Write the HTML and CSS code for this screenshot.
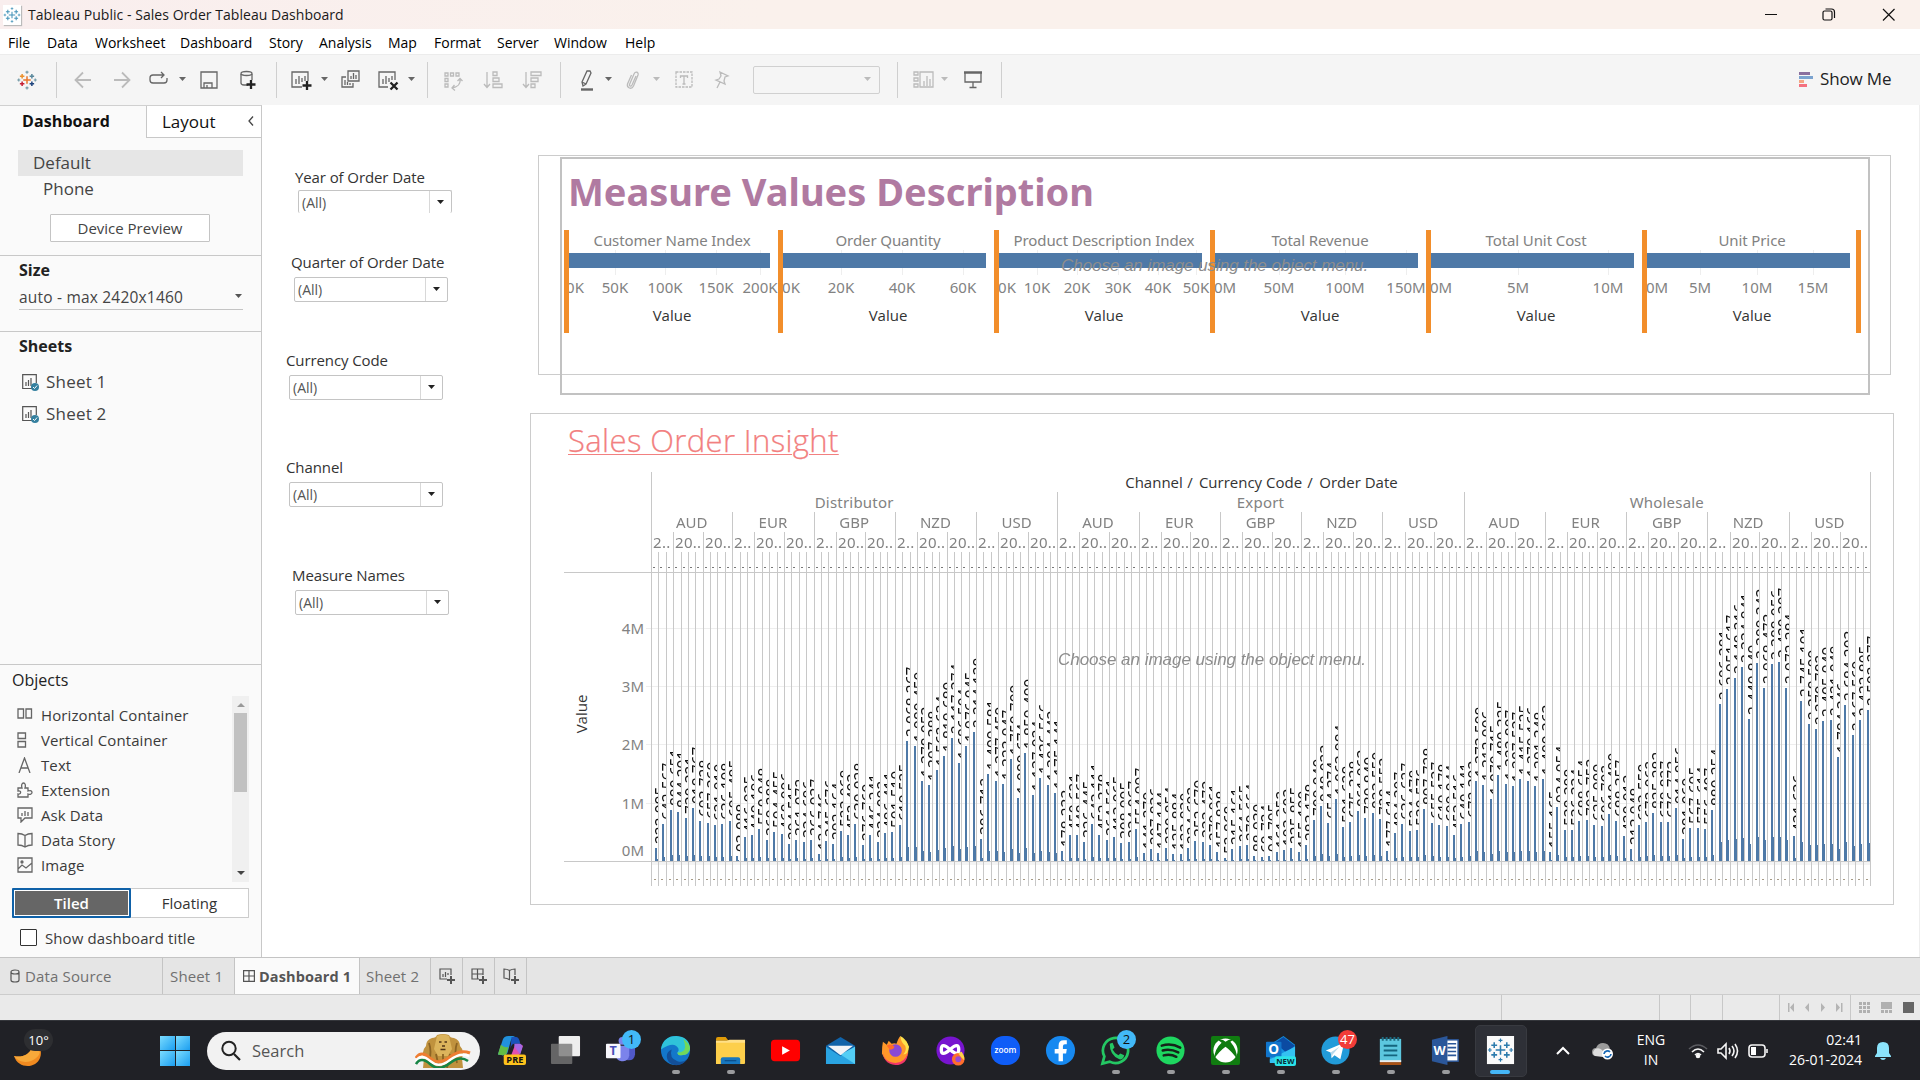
FILE: index.html
```html
<!DOCTYPE html>
<html lang="en">
<head>
<meta charset="utf-8">
<title>Tableau Public - Sales Order Tableau Dashboard</title>
<link rel="stylesheet" href="styles.css">
</head>
<body>
<svg class="defs" width="0" height="0">
  <defs>
    <g id="i-caret"><path d="M0 0h7l-3.500 4z" fill="currentColor"/></g>
    <g id="i-sheet"><path d="M11 14.500H.7V.7h13.600V9M4 8v4M6.500 6v6M9 4v8" fill="none" stroke="#555" stroke-width="1.200"/><circle cx="13" cy="13" r="4" fill="#35809f"/><path d="M11 13l1.500 1.500 2.600-3" fill="none" stroke="#fff" stroke-width="1"/></g>
    <g id="i-tableau" fill="none" stroke-width="1.600">
      <path d="M12 7v10M7 12h10"/><path d="M5.500 4v6M2.500 7h6M18.500 4v6M15.500 7h6M5.500 14v6M2.500 17h6M18.500 14v6M15.500 17h6"/><path d="M12 0v4M10 2h4M12 20v4M10 22h4M1 10v4M-1 12h4M23 10v4M21 12h4" stroke-width="1.200"/>
    </g>
  </defs>
</svg>

<header class="titlebar">
  <svg class="app-icon" width="18" height="20" viewBox="-2 -2 28 28"><use href="#i-tableau" stroke="#4292b8"/></svg>
  <span class="title">Tableau Public - Sales Order Tableau Dashboard</span>
  <svg class="win" width="140" height="20" viewBox="0 0 140 20" fill="none" stroke="#111" stroke-width="1.200"><path d="M3 9.500h12M121 4l11.500 11.500M132.500 4L121 15.500"/><rect x="61" y="6" width="9" height="9" rx="1.500"/><path d="M63.500 4h6a3 3 0 0 1 3 3v6"/></svg>
</header>

<nav class="menubar"><span>File</span><span>Data</span><span>Worksheet</span><span>Dashboard</span><span>Story</span><span>Analysis</span><span>Map</span><span>Format</span><span>Server</span><span>Window</span><span>Help</span></nav>

<div class="toolbar">
  <svg width="24" height="24" viewBox="-4 -4 32 32" fill="none" stroke-width="2"><path d="M12 7v10M7 12h10" stroke="#e8762c"/><path d="M5.500 4v6M2.500 7h6" stroke="#eb912c"/><path d="M18.500 4v6M15.500 7h6" stroke="#59879b"/><path d="M5.500 14v6M2.500 17h6" stroke="#c72035"/><path d="M18.500 14v6M15.500 17h6" stroke="#1f457e"/><path d="M12-.5v4M10 1.500h4M12 20.500v4M10 22.500h4M1 10v4M-1 12h4M23 10v4M21 12h4" stroke="#7199a6" stroke-width="1.500"/></svg>
  <i class="sep"></i>
  <svg class="off" width="24" height="24" viewBox="0 0 24 24"><path d="M20 12H5M12 4.500L4.500 12l7.500 7.500" stroke-width="1.800"/></svg>
  <svg class="off" width="24" height="24" viewBox="0 0 24 24"><path d="M4 12h15M12 4.500l7.500 7.500-7.500 7.500" stroke-width="1.800"/></svg>
  <svg class="on" width="24" height="24" viewBox="0 0 24 24"><path d="M16 7H6a3 3 0 0 0-3 3v2a3 3 0 0 0 3 3h11a3 3 0 0 0 3-3v-2M14 4l3 3-3 3"/></svg>
  <svg class="crt on" width="8" height="5" viewBox="0 0 8 5"><use href="#i-caret"/></svg>
  <svg class="on" width="24" height="24" viewBox="0 0 24 24"><path d="M4 4h16v16H4zM7 20v-5h8v5M10 17v3"/></svg>
  <svg class="on" width="24" height="24" viewBox="0 0 24 24"><path d="M12 17H8a3.500 2 0 0 1-3-2V6M16 12V6"/><ellipse cx="10.500" cy="5.500" rx="5.500" ry="2"/><path d="M15 12v9M10.500 16.500h9" stroke="#222" stroke-width="2.300"/></svg>
  <i class="sep"></i>
  <svg class="on" width="24" height="24" viewBox="0 0 24 24"><path d="M13 19H3V4h16v9M7 11v5M10 8v8M13 10v4M16 8v5"/><path d="M18 13v9M13.500 17.500h9" stroke="#222" stroke-width="2.300"/></svg>
  <svg class="crt on" width="8" height="5" viewBox="0 0 8 5"><use href="#i-caret"/></svg>
  <svg class="on" width="24" height="24" viewBox="0 0 24 24"><path d="M10 3h11v10H10zM13 8v3M15.500 5v6M18 7v4M8 9H4v10h11v-4M7 12v5M9.500 14v3M12 15v2"/></svg>
  <svg class="on" width="24" height="24" viewBox="0 0 24 24"><path d="M12 19H3V4h16v8M7 11v5M10 8v8M13 10v4M16 8v4"/><path d="M14.500 14.500l7 7M21.500 14.500l-7 7" stroke="#222" stroke-width="2.300"/></svg>
  <svg class="crt on" width="8" height="5" viewBox="0 0 8 5"><use href="#i-caret"/></svg>
  <i class="sep"></i>
  <svg class="off" width="24" height="24" viewBox="0 0 24 24"><path d="M4 5h3v3H4zM9.500 5h3v3h-3zM15 5h3v3h-3zM4 10.500h3v3H4zM4 16h3v3H4zM19 11c1 5-3 8-8 9M13.500 17L11 20l3 2.500M16.500 13l2.500-2.500 2.500 2.500"/></svg>
  <svg class="off" width="24" height="24" viewBox="0 0 24 24"><path d="M6 4v15M3 16l3 3.500L9 16M12 4h4v3.500h-4zM12 10h6v3.500h-6zM12 16h9v3.500h-9z"/></svg>
  <svg class="off" width="24" height="24" viewBox="0 0 24 24"><path d="M6 4v15M3 16l3 3.500L9 16M11 4h10v3.500H11zM11 10h7v3.500h-7zM11 16h4v3.500h-4z"/></svg>
  <i class="sep"></i>
  <svg class="on" width="24" height="24" viewBox="0 0 24 24"><path d="M7 14l5-11h3l1 2-5 11-3 2zM7 14l4 2"/><path d="M6 21.500h12" stroke-width="2.400"/></svg>
  <svg class="crt on" width="8" height="5" viewBox="0 0 8 5"><use href="#i-caret"/></svg>
  <svg class="off" width="24" height="24" viewBox="0 0 24 24"><path d="M15 8l-4 9c-1 2-3 1-2.500-.5L13 6c1.500-3 5-2 4 1l-4.500 11c-2 4-7 2-6-2l4-9"/></svg>
  <svg class="crt off" width="8" height="5" viewBox="0 0 8 5"><use href="#i-caret"/></svg>
  <svg class="off" width="24" height="24" viewBox="0 0 24 24"><rect x="4" y="4" width="16" height="15" stroke-dasharray="2.500 1"/><path d="M8.500 10V8h7v2M12 8v8M10.500 16h3"/></svg>
  <svg class="off" width="24" height="24" viewBox="0 0 24 24"><path d="M11 4l8 4-3 1-1 4 1 3-9-4 3-1 2-3zM11 14l-3 6"/></svg>
  <div class="tb-select"><svg class="off" width="8" height="5" viewBox="0 0 8 5"><use href="#i-caret"/></svg></div>
  <i class="sep"></i>
  <svg class="off" width="24" height="24" viewBox="0 0 24 24"><path d="M2 4h4v3H2zM2 10h4v3H2zM2 16h4v3H2zM8 4h13v15H8zM12 13v5M15 8v10M18 11v7"/></svg>
  <svg class="crt off" width="8" height="5" viewBox="0 0 8 5"><use href="#i-caret"/></svg>
  <svg class="on" width="24" height="24" viewBox="0 0 24 24"><path d="M4 5v9h16V5M12 14v5M8.500 19.500h7"/><path d="M3 4.500h18" stroke-width="2.500"/></svg>
  <i class="sep"></i>
  <div class="showme"><svg width="15" height="16" viewBox="0 0 15 16"><path fill="#8a6f9e" d="M0 0h11v3H0z"/><path fill="#7ba3cf" d="M0 4h14v3H0z"/><path fill="#f4a582" d="M0 8h5v3H0z"/><path fill="#f4717f" d="M0 12h8v3H0z"/></svg><span>Show Me</span></div>
</div>

<div class="work">
  <aside class="side">
    <div class="side-tabs"><div class="st-on">Dashboard</div><div class="st-off">Layout<svg width="6" height="10" viewBox="0 0 6 10"><path d="M5 .5L1 5l4 4.500" fill="none" stroke="#444" stroke-width="1.300"/></svg></div></div>
    <section class="devices">
      <div class="dev sel">Default</div>
      <div class="dev phone">Phone</div>
      <button class="preview">Device Preview</button>
    </section>
    <section class="size"><h3>Size</h3><div class="size-sel"><span>auto - max 2420x1460</span><svg width="8" height="5" viewBox="0 0 8 5" color="#555"><use href="#i-caret"/></svg></div></section>
    <section class="sheets"><h3>Sheets</h3>
      <div class="sheet"><svg width="18" height="18" viewBox="0 0 18 18"><use href="#i-sheet"/></svg>Sheet 1</div>
      <div class="sheet"><svg width="18" height="18" viewBox="0 0 18 18"><use href="#i-sheet"/></svg>Sheet 2</div>
    </section>
    <section class="objects"><h4>Objects</h4>
      <div class="obj-wrap">
        <div class="obj-list">
          <div><svg width="16" height="16" viewBox="0 0 16 16"><path d="M1 2h5.500v9H1zM9 2h5.500v9H9z"/></svg>Horizontal Container</div>
          <div><svg width="16" height="16" viewBox="0 0 16 16"><path d="M1 1h7.500v5.500H1zM1 9.500h7.500V15H1z"/></svg>Vertical Container</div>
          <div><svg width="16" height="16" viewBox="0 0 16 16"><path d="M2 16L7.500 1 13 16M4 11h7"/></svg>Text</div>
          <div><svg width="16" height="16" viewBox="0 0 16 16"><path d="M1 6h4c-1-3 0-5 1.500-5S9 3 8 6h3v3c3-1 4 0 4 1.500S13 13 11 12v3H1v-3c3 1 4-4 0-3z"/></svg>Extension</div>
          <div><svg width="16" height="16" viewBox="0 0 16 16"><path d="M1 1h14v10H8l-4 4v-4H1zM5 6v3M8 4v5M11 5v4"/></svg>Ask Data</div>
          <div><svg width="16" height="16" viewBox="0 0 16 16"><path d="M1 1.500q4 0 7 2 3-2 7-2V13q-4 0-7 2-3-2-7-2zM8 3.500V15"/></svg>Data Story</div>
          <div><svg width="16" height="16" viewBox="0 0 16 16"><path d="M1 1h14v14H1zM1 12l4-4 4 3 6-5"/><circle cx="5" cy="5" r="1" fill="#666"/></svg>Image</div>
        </div>
        <div class="scroll"><svg width="8" height="5" viewBox="0 0 8 5" color="#999"><path d="M0 5h8L4 1z" fill="currentColor"/></svg><div class="thumb"></div><svg class="dn" width="8" height="5" viewBox="0 0 8 5"><path d="M0 0h8L4 4z" fill="#444"/></svg></div>
      </div>
      <div class="toggle"><button class="tiled">Tiled</button><button class="floating">Floating</button></div>
      <label class="check"><i></i>Show dashboard title</label>
    </section>
  </aside>

  <main class="canvas">
    <div class="filter f-year"><label>Year of Order Date</label><div class="combo"><span>(All)</span><b><svg width="8" height="5" viewBox="0 0 8 5"><use href="#i-caret"/></svg></b></div></div>
    <div class="filter f-quarter"><label>Quarter of Order Date</label><div class="combo"><span>(All)</span><b><svg width="8" height="5" viewBox="0 0 8 5"><use href="#i-caret"/></svg></b></div></div>
    <div class="filter f-currency"><label>Currency Code</label><div class="combo"><span>(All)</span><b><svg width="8" height="5" viewBox="0 0 8 5"><use href="#i-caret"/></svg></b></div></div>
    <div class="filter f-channel"><label>Channel</label><div class="combo"><span>(All)</span><b><svg width="8" height="5" viewBox="0 0 8 5"><use href="#i-caret"/></svg></b></div></div>
    <div class="filter f-names"><label>Measure Names</label><div class="combo"><span>(All)</span><b><svg width="8" height="5" viewBox="0 0 8 5"><use href="#i-caret"/></svg></b></div></div>
    <div class="zone zone-top"></div>
    <div class="zone zone-measures">
      <h1>Measure Values Description</h1>
      <svg id="measures" width="1306" height="110" viewBox="562 226 1306 110"></svg>
      <p class="hint">Choose an image using the object menu.</p>
    </div>
    <div class="zone zone-insight">
      <h2>Sales Order Insight</h2>
      <svg id="insight" width="1361" height="430" viewBox="531 466 1361 430"></svg>
      <p class="hint">Choose an image using the object menu.</p>
    </div>
  </main>
</div>

<div class="tabs">
  <div class="tab src"><svg width="10" height="14" viewBox="0 0 10 14"><path d="M1 3v8q0 2 4 2t4-2V3q0-2-4-2T1 3q0 2 4 2t4-2"/></svg>Data Source</div>
  <div class="tab s1">Sheet 1</div>
  <div class="tab d1"><svg width="12" height="12" viewBox="0 0 12 12"><path d="M.6.6h10.800v10.800H.6zM6 0v12M0 6h12"/></svg>Dashboard 1</div>
  <div class="tab s2">Sheet 2</div>
  <div class="tab ic"><svg width="18" height="18" viewBox="0 0 18 18"><path d="M9 12H2V2h11v6M5 7v3M7.500 5v5M10 6v2"/><path d="M13 9v8M9 13h8" stroke-width="2"/></svg></div>
  <div class="tab ic"><svg width="18" height="18" viewBox="0 0 18 18"><path d="M9 12H2V2h11v6M7.500 2v10M2 7h11"/><path d="M13 9v8M9 13h8" stroke-width="2"/></svg></div>
  <div class="tab ic"><svg width="18" height="18" viewBox="0 0 18 18"><path d="M8 13q-3-2-6-2V2q3 0 5.500 1.500Q10 2 13 2v6M7.500 3.500V13"/><path d="M13 9v8M9 13h8" stroke-width="2"/></svg></div>
</div>

<div class="status">
  <i></i><i></i><i></i><i></i>
  <div class="pager"><svg width="56" height="9" viewBox="0 0 56 9" fill="#b4b4b4"><path d="M0 0h1.500v9H0zM6 0v9L2 4.500zM21 0v9l-4-4.500zM33 0v9l4-4.500zM48 0v9l4-4.500zM53 0h1.500v9H53z"/></svg></div>
  <div class="views"><svg width="56" height="12" viewBox="0 0 56 12"><path fill="#b0b0b0" d="M0 0h3v3H0zM4 0h3v3H4zM8 0h3v3H8zM0 4h3v3H0zM4 4h3v3H4zM8 4h3v3H8zM0 8h3v3H0zM4 8h3v3H4zM8 8h3v3H8zM22 0h11v7H22zM22 8h3v3h-3zM26 8h3v3h-3zM30 8h3v3h-3z"/><path fill="#666" d="M44 0h11v11H44z"/></svg></div>
</div>

<footer class="taskbar">
  <div class="weather"><svg width="40" height="38" viewBox="0 0 40 38"><path d="M1 24c7 2 16-1 18-9 0-3 0-5-1-7 8 3 12 11 9 18-4 11-22 11-26-2z" fill="#f08a20"/><path d="M1 24c7 2 16-1 18-9l8 5c-2 9-18 15-26 4z" fill="#f7a93a"/></svg><span>10°</span></div>
  <div class="start"><i></i><i></i><i></i><i></i></div>
  <div class="search"><svg width="20" height="22" viewBox="0 0 20 22"><circle cx="8" cy="8.500" r="6.700" fill="none" stroke="#222" stroke-width="2"/><path d="M13 14l6 6" stroke="#222" stroke-width="2.200"/></svg><span>Search</span>
    <svg class="emblem" width="56" height="34" viewBox="0 0 56 34"><path d="M8 34l1-10Q6 17 11 12q0-6 6-8 4 0 5-3 6-2 12 0 1 3 5 3 6 2 6 8 5 5 2 12l1 10z" fill="#c0923e"/><path d="M22 2q6-3 12 0l3 13-4 7H23l-4-7z" fill="#dcb45c"/><path d="M14 9q3 8 0 20M42 9q-3 8 0 20M21 20l3 14M35 20l-3 14M28 20v14" stroke="#8c6424" stroke-width="1.800" fill="none"/><path d="M24 8h2.500M29.500 8H32M27 12h3M25.500 15.500h5" stroke="#523617" stroke-width="1.400"/><path d="M1 24q5-8 14 0t20-1q10-8 20-4" fill="none" stroke="#ef7d32" stroke-width="3"/><path d="M1 27q5-8 14 0t20-1q10-8 19-4" fill="none" stroke="#fff" stroke-width="2.500"/><path d="M1 30q5-8 14 0t20-1q10-8 18-2" fill="none" stroke="#178545" stroke-width="2.500"/></svg>
  </div>
  <div class="apps">
    <div class="app"><svg viewBox="0 0 32 32"><path d="M3 20L8 5q1-4 6-4h7q-4 1-5 6l-3 11q-1 3-5 3z" fill="#2191dc"/><path d="M3 20L6 10q5 4 8 2l-2 7q-1 2-4 2z" fill="#62bd45"/><path d="M29 11l-4 10q-1 5-7 5h-6q4-1 5-6l3-8q1-3 4-3z" fill="#e250af"/><path d="M17 2h5q3 0 4 7h-6q-3 0-4 5z" fill="#1953bb"/><path d="M20 9h6q3 1 2 5l-2 6-6-8z" fill="#a669e5"/><rect x="9" y="20" width="23" height="11" rx="2" fill="#fdc21c"/><text x="20.500" y="29" text-anchor="middle" font-size="9.500" font-weight="700" fill="#111">PRE</text></svg></div>
    <div class="app"><svg viewBox="0 0 32 32"><rect x="9" y="1" width="22" height="21" rx="1" fill="#eee"/><rect x="1" y="9" width="22" height="21" rx="1" fill="#777" fill-opacity=".8"/></svg></div>
    <div class="app"><svg viewBox="0 0 32 32"><circle cx="18" cy="6" r="4" fill="#7b83eb"/><path d="M20 11h11v9q-1 7-8 6z" fill="#5059c9"/><path d="M11 11h14v10q-1 7-8 6-6-1-6-7z" fill="#7b83eb"/><rect x="1" y="9" width="15" height="15" rx="1" fill="#f7f7fc"/><text x="8.500" y="21" text-anchor="middle" font-size="13" font-weight="700" fill="#464eb8">T</text></svg><span class="badge">1</span></div>
    <div class="app run"><svg viewBox="0 0 32 32"><circle cx="16" cy="16" r="15" fill="#1377ca"/><path d="M1 15Q3 1 17 1q13 1 14 12 0 8-9 8-4 0-4-3 2-2 1-4-3-6-11-3-5 2-7 4z" fill="#2fc3d9"/><path d="M24 4q7 5 7 10-1 7-9 7-4 0-4-3c11 0 8-9 6-14z" fill="#72d85a"/><path d="M12 15q-3 9 6 12 5 2 10-2-5 7-13 6-8-2-8-9 0-5 5-7z" fill="#134f98"/></svg></div>
    <div class="app run"><svg viewBox="0 0 32 32"><path d="M1 4q0-2 2-2h8l3 4h-13z" fill="#df9b08"/><path d="M1 6h30v23q0 1-1 1H1z" fill="#fdcf4b"/><path d="M1 6h11l3-1h16v3H1z" fill="#ffe087"/><path d="M6 30v-5q0-2 2-2h16q2 0 2 2v5z" fill="#1777bf"/><path d="M10 26.500h12" stroke="#0b4f8b" stroke-width="1.300"/></svg></div>
    <div class="app"><svg viewBox="0 0 32 32"><rect x="1" y="5" width="30" height="22" rx="4" fill="#f00"/><path d="M12.500 11.500v9l8-4.500z" fill="#fff"/></svg></div>
    <div class="app"><svg viewBox="0 0 32 32"><path d="M1 11L16 2l15 9v19H1z" fill="#1063a9"/><path d="M1 12l15 10L31 12v18H1z" fill="#2aa4e2"/><path d="M31 12v18L16 20z" fill="#53cef5"/><path d="M3 11h26L16 21z" fill="#f1f4f7"/></svg></div>
    <div class="app"><svg viewBox="0 0 32 32"><path d="M3 7l4 3 2-4 3 3q3-1 5 0 2-6 4-8 1 5 4 7l2-2q3 7 2 13-3 11-13 11T2 19q0-7 1-12z" fill="#ff9829"/><path d="M3 14q-1 14 13 15 10-1 13-11-1 13-13 13Q2 30 3 14z" fill="#f23669"/><path d="M21 2q1 6 5 9 2 5-2 9 5 0 6-8-3-8-9-11z" fill="#ffe14b"/><circle cx="16" cy="16" r="6.500" fill="#8a49d6"/><path d="M7 11q4-3 8 1-1 3-5 3z" fill="#ff6a2a"/></svg></div>
    <div class="app"><svg viewBox="0 0 32 32"><circle cx="16" cy="16" r="14.500" fill="#7814cf"/><path d="M15.500 15q-9-8-9 0t9 0q9-8 9 0t-9 0z" fill="none" stroke="#fff" stroke-width="3.500"/><circle cx="24" cy="25" r="6.500" fill="#ff6e2d"/><path d="M24 19q4-3 4-1 3 4 2 8-4-4-6-7z" fill="#ffd24a"/><circle cx="24" cy="25" r="3" fill="#9b4bd4"/></svg></div>
    <div class="app"><svg viewBox="0 0 32 32"><rect x="1" y="1" width="30" height="30" rx="13" fill="#0f5df7"/><text x="16" y="18.500" text-anchor="middle" font-size="8.500" font-weight="600" fill="#fff">zoom</text></svg></div>
    <div class="app"><svg viewBox="0 0 32 32"><circle cx="16" cy="16" r="15" fill="#1789f0"/><path d="M14 27v-8h-4v-4.500h4V11q0-5.500 5.500-5.500h3v4h-2q-2 0-2 2v3h4l-.7 4.500h-3.300V27z" fill="#fff"/></svg></div>
    <div class="app run"><svg viewBox="0 0 32 32"><path d="M2.500 29.500l2-7.500A13 13 0 1 1 10 27.500z" fill="none" stroke="#24c763" stroke-width="2.800"/><path d="M10 9l3-1 2 5-2 2q2 4 6 6l2-2 4 2q-1 5-5 4Q10 21 10 9z" fill="#24c763"/></svg><span class="badge">2</span></div>
    <div class="app run"><svg viewBox="0 0 32 32"><circle cx="16" cy="16" r="14.500" fill="#1ed760"/><path d="M7 11q10-3 19 2M8 16q8-2 16 2M9 21q7-2 13 1.500" fill="none" stroke="#15231a" stroke-width="2.600" stroke-linecap="round"/></svg></div>
    <div class="app run"><svg viewBox="0 0 32 32"><rect x="1" y="1" width="30" height="30" rx="2" fill="#107c10"/><circle cx="16" cy="16" r="12.500" fill="#fff"/><path d="M8 5q5-1 8 2 4-3 8-2l-3 2q7 8 7 18-5-8-12-13Q9 17 4 25q1-11 8-17z" fill="#107c10"/></svg></div>
    <div class="app run"><svg viewBox="0 0 32 32"><path d="M5 10L19 1l12 9v18H5z" fill="#1490df"/><path d="M10 8l9-6 12 9-9 7z" fill="#0b4ba2"/><path d="M5 25l26-13v17H5z" fill="#34c2f2"/><rect x="1" y="7" width="16" height="16" rx="1" fill="#1175cb"/><text x="9" y="20" text-anchor="middle" font-size="14" font-weight="700" fill="#fff">O</text><rect x="10" y="22" width="22" height="10" rx="2" fill="#2be3e8"/><text x="21" y="30" text-anchor="middle" font-size="8" font-weight="700" fill="#082c36">NEW</text></svg></div>
    <div class="app run"><svg viewBox="0 0 32 32"><circle cx="16" cy="16" r="14.500" fill="#229bd9"/><path d="M6 16l19-8-4 17-6-4-3 3-1-6z" fill="#fff"/><path d="M11 18l9-6-7 8-1 4z" fill="#b6d8ea"/></svg><span class="badge red">47</span></div>
    <div class="app run"><svg viewBox="0 0 32 32"><path d="M5 4h22v24H5z" fill="#5cc7df"/><path d="M5 28h22v3H5z" fill="#a95215"/><path d="M5 26h22v2H5z" fill="#ececec"/><path d="M9 11h14M9 16h14M9 21h14" stroke="#14657e" stroke-width="2"/><path d="M8 2v4M12 2v4M16 2v4M20 2v4M24 2v4" stroke="#1d6a80" stroke-width="2"/></svg></div>
    <div class="app run"><svg viewBox="0 0 32 32"><rect x="15" y="5" width="14" height="22" fill="#fff" stroke="#2b579a" stroke-width="1.500"/><path d="M18 9h9M18 13h9M18 17h9M18 21h9" stroke="#2b579a" stroke-width="1.700"/><path d="M2 5l16-4v30L2 27z" fill="#2b579a"/><text x="10" y="21" text-anchor="middle" font-size="13" font-weight="700" fill="#fff">W</text></svg></div>
    <div class="app run active"><svg viewBox="0 0 32 32"><path d="M2 1h28v29H2z" fill="#fafafa"/><use href="#i-tableau" stroke="#2c7bad" x="4" y="3.500"/></svg></div>
  </div>
  <svg class="chev" width="14" height="9" viewBox="0 0 14 9"><path d="M1 8l6-6 6 6" fill="none" stroke="#fff" stroke-width="2"/></svg>
  <svg class="cloud" width="22" height="18" viewBox="0 0 22 18"><path d="M4 14a4 4 0 0 1 0-8Q6 1 11 1q6 0 7 6 3 1 2 7z" fill="#9b9b9b"/><path d="M3 14q-4-3 0-7 5-2 8 2v6z" fill="#ddd"/><circle cx="15.500" cy="12" r="5.500" fill="#fff"/><path d="M12 12a3.500 3.500 0 0 1 6-2M19 12a3.500 3.500 0 0 1-6 2" stroke="#1767b4" stroke-width="1.700" fill="none"/></svg>
  <div class="lang">ENG<br>IN</div>
  <svg class="net" width="82" height="20" viewBox="0 0 82 20" fill="none" stroke="#f5f5f5" stroke-width="1.600"><path d="M1 8q9-8 18 0" stroke="#5b5c61"/><path d="M4 11q6-6 12 0M7 14q3-3 6 0"/><circle cx="10" cy="15" r="1.500" fill="#fff"/><path d="M30 8h3l5-5v14l-5-5h-3zM41 7q2 3 0 6M44 5q4 5 0 10M47 3q5 7 0 14"/><rect x="61" y="4" width="16" height="12" rx="3"/><path d="M79 8v4"/><rect x="63" y="6" width="5" height="8" fill="#fff" stroke="none"/></svg>
  <div class="clock">02:41<br>26-01-2024</div>
  <svg class="bell" width="18" height="20" viewBox="0 0 18 20"><path d="M1 15l2-3V7q0-6 6-6t6 6v5l2 3v1H1zM6 17h6q-1 2-3 2t-3-2z" fill="#8be3fb"/></svg>
</footer>
<script src="charts.js"></script>
</body>
</html>
```
FILE: styles.css
```css
* { box-sizing: border-box; }
body { margin: 0; width: 1920px; height: 1080px; overflow: hidden; display: flex; flex-direction: column; background: #fff; font-family: "Open Sans", "Noto Sans", sans-serif; color: #333; }
svg { display: block; flex: none; }
.defs { position: absolute; }
h1, h2, h3, h4, p { margin: 0; }
button { font: inherit; padding: 0; border-radius: 1px; }

.titlebar { height: 29px; flex: none; display: flex; align-items: center; padding-left: 3px; background: linear-gradient(90deg, #f9eeee, #faf1ec 40%); color: #1a1a1a; }
.app-icon { background: #fff; box-shadow: 1px 1px 1px #bbb; }
.title { margin-left: 7px; font-size: 14px; letter-spacing: .04px; }
.win { margin-left: auto; margin-right: 18px; }

.menubar { height: 25px; flex: none; padding: 1px 0 0 8px; display: grid; grid-template-columns: 39px 48px 85px 89px 50px 69px 46px 63px 57px 71px 40px; align-items: center; font-size: 14px; color: #000; white-space: nowrap; }

.toolbar { height: 51px; flex: none; background: #f5f5f5; border-top: 1px solid #ececec; padding: 0 0 1px 15px; display: grid; align-items: center; justify-items: start; grid-template-columns: 41px 15px 39px 37px 32px 18px 39px 40px 13px 32px 17px 38px 32px 19px 14px 40px 39px 40px 15px 30px 16px 32px 19px 37px 44px 144px 15px 29px 20px 40px 798px auto; }
.toolbar svg { fill: none; }
.toolbar .on { color: #666; stroke: #666; stroke-width: 1.3; }
.toolbar .off { color: #bbb; stroke: #bbb; stroke-width: 1.3; }
.toolbar .crt, .tb-select .off { stroke: none; }
.sep { width: 1px; height: 36px; background: #cfcfcf; }
.tb-select { width: 127px; height: 28px; border: 1px solid #d0d0d0; border-radius: 2px; display: flex; align-items: center; justify-content: flex-end; padding-right: 7px; }
.showme { display: flex; align-items: center; gap: 6px; font-size: 17px; line-height: 22px; letter-spacing: -.15px; color: #222; white-space: nowrap; }
.showme span { margin-top: -2px; }

.work { height: 852px; flex: none; display: flex; }
.side { width: 262px; flex: none; background: #fafafa; border-right: 1px solid #c8c8c8; border-top: 1px solid #d0d0d0; display: flex; flex-direction: column; }
.side-tabs { height: 32px; flex: none; display: flex; color: #111; }
.st-on { width: 146px; padding-left: 22px; line-height: 30px; font-weight: 700; font-size: 16px; letter-spacing: .1px; }
.st-off { flex: 1; background: #fff; border-left: 1px solid #c8c8c8; border-bottom: 1px solid #c8c8c8; padding-left: 15px; line-height: 32px; display: flex; justify-content: space-between; font-size: 17px; }
.st-off svg { margin: 10px 7px 0 0; }
.devices { height: 118px; flex: none; padding: 12px 18px 0 18px; border-bottom: 1px solid #c8c8c8; display: flex; flex-direction: column; font-size: 17px; color: #444; }
.dev { height: 26px; line-height: 25px; padding-left: 15px; }
.dev.phone { padding-left: 25px; line-height: 26px; }
.sel { background: #e6e6e6; }
.preview { width: 160px; height: 28px; margin: 12px 0 0 32px; border: 1px solid #c4c4c4; background: #fff; font-size: 15px; color: #444; }
.size { height: 76px; flex: none; padding: 0 18px 0 19px; border-bottom: 1px solid #c8c8c8; }
h3 { font-size: 16px; line-height: 28px; color: #222; }
.size-sel { display: flex; align-items: center; height: 26px; border-bottom: 1px solid #c4c4c4; font-size: 15.500px; letter-spacing: .2px; color: #444; }
.size-sel svg { margin-left: auto; }
.sheets { height: 333px; flex: none; border-bottom: 1px solid #c8c8c8; padding-left: 19px; }
.sheet { height: 32px; display: flex; align-items: center; gap: 6px; padding-left: 3px; font-size: 17px; letter-spacing: .2px; color: #444; }
.sheets h3 { margin-bottom: 5px; line-height: 28px; }
.sheet svg { margin-top: 3px; }
.objects { padding: 0 12px; color: #3a3a3a; }
h4 { font-size: 16px; font-weight: 500; line-height: 30px; height: 31px; color: #222; }
.obj-wrap { display: flex; height: 186px; }
.obj-list { width: 220px; padding: 6px 0 0 5px; font-size: 15px; letter-spacing: .1px; }
.obj-list div { height: 25px; display: flex; align-items: center; gap: 8px; }
.obj-list svg { fill: none; stroke: #666; stroke-width: 1.3; }
.scroll { width: 17px; background: #f0f0f0; display: flex; flex-direction: column; align-items: center; padding: 6px 0; }
.thumb { width: 13px; height: 79px; margin-top: 6px; background: #c1c1c1; }
.dn { margin-top: auto; }
.toggle { display: flex; height: 30px; margin-top: 6px; font-size: 15px; line-height: 24px; }
.tiled { width: 119px; background: #666; color: #fff; font-weight: 600; border: 2px solid #0f61a8; box-shadow: inset 0 0 0 1px #fff; }
.floating { width: 118px; background: #fff; border: 1px solid #ccc; border-left: 0; color: #333; }
.check { display: flex; align-items: center; gap: 8px; height: 17px; margin: 11px 0 0 8px; font-size: 15px; white-space: nowrap; letter-spacing: .1px; }
.check i { width: 17px; height: 17px; border: 1px solid #333; background: #fff; border-radius: 1px; }

.canvas { position: relative; flex: 1; background: #fff; border-right: 1px solid #eee; }
.filter { position: absolute; width: 158px; }
.filter label { display: block; font-size: 15px; font-weight: 500; line-height: 18px; height: 20px; letter-spacing: -.1px; white-space: nowrap; color: #333; }
.combo { margin: 4px 0 0 3px; width: 154px; height: 25px; border: 1px solid #c4c4c4; border-radius: 2px; display: flex; align-items: center; font-size: 14px; padding-left: 3px; color: #555; }
.combo b { margin-left: auto; width: 22px; height: 100%; border-left: 1px solid #d8d8d8; display: grid; place-items: center; color: #222; }
.f-year { left: 33px; top: 63px; }
.f-year .combo { margin-top: 2px; height: 23px; border-bottom: 0; }
.f-quarter { left: 29px; top: 148px; }
.f-currency { left: 24px; top: 246px; }
.f-channel { left: 24px; top: 353px; }
.f-names { left: 30px; top: 461px; }
.zone { position: absolute; }
.zone-top { left: 276px; top: 50px; width: 1353px; height: 220px; border: 1px solid #ccc; }
.zone-measures { left: 298px; top: 52px; width: 1310px; height: 238px; border: 2px solid #c2c2c2; }
.zone-measures h1 { height: 67px; padding-left: 6px; font-family: "Noto Sans", sans-serif; font-size: 38px; line-height: 64px; font-weight: 700; color: #b07aa1; white-space: nowrap; }
.zone-insight { left: 268px; top: 308px; width: 1364px; height: 492px; border: 1px solid #ccc; }
.zone-insight h2 { height: 52px; padding-left: 37px; font-size: 31px; font-weight: 300; -webkit-text-stroke: .25px #f28080; letter-spacing: .38px; line-height: 53px; color: #f28080; text-decoration: underline; text-decoration-thickness: 1px; text-underline-offset: 2px; white-space: nowrap; }
.hint { position: absolute; font: italic 17px "Liberation Sans", Arial, sans-serif; color: #8d8d8d; white-space: nowrap; }
.zone-measures .hint { left: 499px; top: 97px; letter-spacing: -.05px; }
.zone-insight .hint { left: 527px; top: 236px; letter-spacing: -.03px; }
#measures text, #insight text { font-family: "Noto Sans", sans-serif; font-size: 15px; fill: #828282; }
#measures .dark, #insight .dark { font-family: "Open Sans", sans-serif; fill: #333; font-weight: 500; }
#insight .mark { fill: #111; font-size: 15.500px; }
#insight { shape-rendering: crispEdges; }

.tabs { height: 38px; flex: none; display: flex; background: #e5e5e5; border-top: 1px solid #c4c4c4; border-bottom: 1px solid #ccc; font-size: 15px; color: #707070; }
.tab { border-right: 1px solid #c4c4c4; display: flex; align-items: center; white-space: nowrap; letter-spacing: .15px; }
.tab svg { fill: none; stroke: #555; stroke-width: 1.2; }
.src { width: 163px; padding-left: 10px; gap: 5px; }
.s1 { width: 72px; padding-left: 7px; }
.d1 { width: 125px; background: #fafafa; color: #555; font-weight: 700; padding-left: 8px; gap: 4px; font-size: 14.500px; letter-spacing: .1px; }
.s2 { width: 71px; padding-left: 6px; }
.ic { width: 32px; justify-content: center; }

.status { height: 25px; flex: none; background: #eaeaea; display: grid; grid-template-columns: 1502px 158px 31px 32px 58px 70px 69px; grid-template-rows: 25px; }
.status i { border-right: 1px solid #c8c8c8; }
.pager { border-left: 1px solid #c8c8c8; border-right: 1px solid #c8c8c8; padding-left: 8px; display: flex; align-items: center; grid-column: 5 / 7; justify-self: end; width: 72px; }
.views { padding-left: 8px; display: flex; align-items: center; }

.taskbar { height: 60px; flex: none; background: #202126; border-top: 1px solid #34363b; display: flex; align-items: center; color: #fff; }
.weather { position: relative; width: 160px; padding-left: 13px; }
.weather span { position: absolute; left: 24px; top: -3px; width: 29px; height: 22px; line-height: 22px; text-align: center; border-radius: 11px; background: #2d2e31; font-size: 13px; }
.start { width: 30px; height: 30px; display: grid; grid-template-columns: 1fr 1fr; gap: 1px; }
.start i { background: linear-gradient(135deg, #7bdcff, #1b9ef0); }
.search { width: 273px; height: 38px; margin-left: 17px; border-radius: 19px; background: #f2f2f2; display: flex; align-items: center; padding: 0 9px 0 14px; color: #555; font-size: 16.500px; }
.search span { margin-left: 11px; }
.emblem { margin-left: auto; }
.apps { display: flex; margin-left: 3px; height: 59px; }
.app { width: 55px; position: relative; display: grid; place-items: center; }
.app svg { width: 31px; height: 31px; z-index: 1; }
.app text { font-family: "Open Sans", sans-serif; }
.app.run::after { content: ""; position: absolute; left: 24px; bottom: 6px; width: 8px; height: 4px; border-radius: 2px; background: #9a9b9e; }
.app.active::before { content: ""; position: absolute; left: 2px; top: 4px; width: 50px; height: 50px; border-radius: 5px; background: #2e3037; border: 1px solid #383a40; }
.app.active::after { left: 17px; width: 20px; background: #45b7f7; }
.badge { position: absolute; z-index: 2; left: 29px; top: 9px; width: 19px; height: 19px; line-height: 19px; border-radius: 50%; background: #42b9f8; color: #111; text-align: center; font-size: 13px; }
.badge.red { background: #f23c38; color: #fff; left: 30px; }
.chev { margin-left: 28px; }
.cloud { margin-left: 22px; }
.lang { width: 46px; margin-left: 14px; text-align: center; font-size: 14px; line-height: 20px; margin-top: -2px; }
.net { margin-left: 14px; }
.clock { width: 96px; text-align: right; margin: -2px 0 0 -4px; font-size: 14px; line-height: 20px; white-space: nowrap; }
.bell { margin-left: 12px; }
```
FILE: charts.js
```js
const NS = 'http://www.w3.org/2000/svg';
function add(parent, tag, attrs, text) {
  const el = document.createElementNS(NS, tag);
  for (const k in attrs) el.setAttribute(k, attrs[k]);
  if (text !== undefined) el.textContent = text;
  parent.appendChild(el);
  return el;
}
const rect = (p, x, y, width, height, fill) => add(p, 'rect', { x, y, width, height, fill });

/* Measure totals: six small horizontal bars side by side */
const ms = document.getElementById('measures');
const panels = [
  ['Customer Name Index', [[575, '0K'], [615, '50K'], [665, '100K'], [716, '150K'], [760, '200K']]],
  ['Order Quantity', [[791, '0K'], [841, '20K'], [902, '40K'], [963, '60K']]],
  ['Product Description Index', [[1007, '0K'], [1037, '10K'], [1077, '20K'], [1118, '30K'], [1158, '40K'], [1196, '50K']]],
  ['Total Revenue', [[1225, '0M'], [1279, '50M'], [1345, '100M'], [1406, '150M']]],
  ['Total Unit Cost', [[1441, '0M'], [1518, '5M'], [1608, '10M']]],
  ['Unit Price', [[1657, '0M'], [1700, '5M'], [1757, '10M'], [1813, '15M']]]
];
const edges = [564, 778, 994, 1210, 1426, 1642, 1856];
panels.forEach(([name, ticks], i) => {
  const cx = 672 + i * 216;
  add(ms, 'text', { x: cx, y: 246, 'text-anchor': 'middle', 'letter-spacing': -.1 }, name);
  ticks.slice(1).forEach(([x]) => rect(ms, x, 250, 1, 25, '#eee'));
  rect(ms, edges[i] + 5, 253, (i ? 203 : 201), 15, '#4e79a7');
  ticks.forEach(([x, t]) => add(ms, 'text', { x, y: 293, 'text-anchor': 'middle' }, t));
  add(ms, 'text', { x: cx, y: 321, 'text-anchor': 'middle', class: 'dark' }, 'Value');
});
edges.forEach(x => rect(ms, x, 230, 5, 103, '#f28e2b'));

/* Sales by channel, currency and month; bar heights in pixels above the baseline */
const svg = document.getElementById('insight');
const bars = [
  [13,37,51,49,43,53,40,38,36,37,40], [5,24,26,32,21,29,27,17,21,19,21], [7,20,17,30,26,37,16,26,19,28,29],
  [36,120,115,80,76,91,105,123,98,115,129], [22,87,80,77,102,63,108,66,83,76,68],
  [10,26,26,19,37,26,21,24,18,19,32], [8,12,8,13,7,7,13,20,19,16,9], [3,12,15,16,5,4,5,9,11,13,9],
  [16,41,55,38,62,34,39,50,43,48,42], [10,28,37,30,31,52,38,36,35,26,37],
  [39,80,76,62,86,77,75,82,80,75,82], [9,54,31,31,40,41,36,35,47,40,25], [12,36,39,48,39,39,53,22,33,33,32],
  [51,157,172,183,194,142,198,173,197,199,173], [25,160,137,132,140,141,104,156,126,141,151]
];
const X0 = 651, STEP = 1219 / 165, BASE = 861, TOP = 572, GREY = '#c8c8c8';
const col = k => Math.round(X0 + k * STEP);
[[628, '4M'], [686, '3M'], [744, '2M'], [803, '1M']].forEach(([y, t]) => {
  rect(svg, 646, y, 1224, 1, '#eee');
  add(svg, 'text', { x: 644, y: y + 6, 'text-anchor': 'end' }, t);
});
add(svg, 'text', { x: 644, y: 856, 'text-anchor': 'end' }, '0M');
rect(svg, X0, 862, 1219, 3, '#f4f4f4');
add(svg, 'text', { transform: 'translate(587 714) rotate(-90)', 'text-anchor': 'middle', class: 'dark' }, 'Value');
[['Channel', 1154], ['/', 1190], ['Currency Code', 1250.5], ['/', 1310], ['Order Date', 1358.5]].forEach(([t, x]) =>
  add(svg, 'text', { x, y: 488, 'text-anchor': 'middle', class: 'dark' }, t));
['Distributor', 'Export', 'Wholesale'].forEach((t, i) =>
  add(svg, 'text', { x: X0 + (i + .5) * 1219 / 3, y: 508, 'text-anchor': 'middle', 'letter-spacing': .2 }, t));
const currencies = ['AUD', 'EUR', 'GBP', 'NZD', 'USD'];
for (let k = 0; k <= 165; k++) {
  const m = k % 11;
  const y = k === 0 || k === 165 ? 472 : k % 55 === 0 ? 492 : m === 0 ? 512 : m === 3 || m === 7 ? 532 : 552;
  rect(svg, col(k), y, 1, 886 - y, GREY);
}
/* Value labels are cut off by the narrow columns */
const defs = add(svg, 'defs', {});
const clip = add(defs, 'clipPath', { id: 'columns', clipPathUnits: 'userSpaceOnUse' });
for (let k = 0; k < 165; k++) add(clip, 'rect', { x: col(k) + 4, y: TOP, width: col(k + 1) - col(k) - 4, height: BASE - TOP });
const marks = add(svg, 'g', { 'clip-path': 'url(#columns)' });
bars.forEach((group, g) => {
  add(svg, 'text', { x: X0 + (g + .5) * STEP * 11, y: 528, 'text-anchor': 'middle' }, currencies[g % 5]);
  [[0, '2..'], [3, '20..'], [7, '20..']].forEach(([o, t]) =>
    add(svg, 'text', { x: col(g * 11 + o) + 2, y: 548, 'letter-spacing': .3 }, t));
  group.forEach((h, m) => {
    const k = g * 11 + m, x = col(k);
    rect(svg, x + 4, BASE - h, 2, h, '#4e79a7');
    const s = Math.max(1, Math.round(h * .12));
    rect(svg, x + 6, BASE - s, 1, s, '#4e79a7');
    rect(svg, x + 2, 567, 2, 1, '#777');
    rect(svg, x + 3, 879, 2, 1, '#a79b86');
    const value = Math.round(h / 58.3 * 1e6 + (k * 7919) % 9973).toLocaleString('en-US');
    const right = Math.min(x + 8, col(k + 1));
    const cell = add(marks, 'svg', { x: x + 4, y: TOP, width: right - x - 4, height: BASE - TOP, overflow: 'hidden' });
    add(cell, 'text', { transform: `translate(11.500 ${BASE - TOP - h - 4}) rotate(-90)`, class: 'mark' }, value);
  });
});
rect(svg, 564, TOP, 1307, 1, GREY);
rect(svg, 564, BASE, 1307, 1, GREY);
```
